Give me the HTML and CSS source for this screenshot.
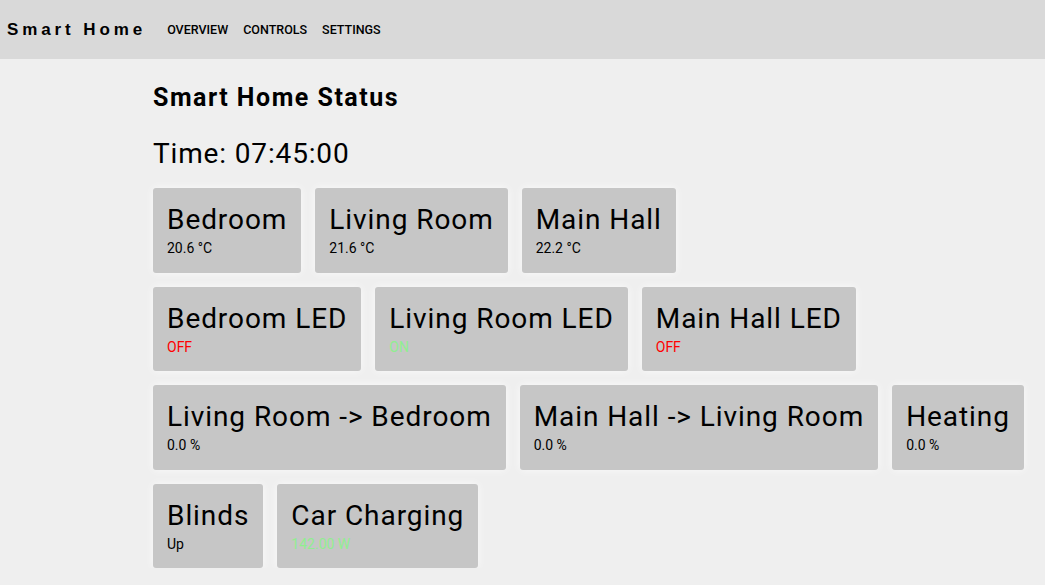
FILE: index.html
```html
<!DOCTYPE html>
<html>
<head>
<meta charset="utf-8">
<link rel="stylesheet" href="styles.css">
</head>
<body>
<header class="topbar">
  <div class="brand">Smart Home</div>
  <nav class="nav">
    <a class="nav-link">OVERVIEW</a>
    <a class="nav-link">CONTROLS</a>
    <a class="nav-link">SETTINGS</a>
  </nav>
</header>
<main class="content">
  <h2 class="page-title">Smart Home Status</h2>
  <div class="time">Time: 07:45:00</div>
  <div class="rows">
    <div class="row">
      <div class="card"><div class="card-title">Bedroom</div><div class="card-value">20.6 °C</div></div>
      <div class="card"><div class="card-title">Living Room</div><div class="card-value">21.6 °C</div></div>
      <div class="card"><div class="card-title">Main Hall</div><div class="card-value">22.2 °C</div></div>
    </div>
    <div class="row">
      <div class="card"><div class="card-title">Bedroom LED</div><div class="card-value off">OFF</div></div>
      <div class="card"><div class="card-title">Living Room LED</div><div class="card-value on">ON</div></div>
      <div class="card"><div class="card-title">Main Hall LED</div><div class="card-value off">OFF</div></div>
    </div>
    <div class="row">
      <div class="card"><div class="card-title">Living Room -&gt; Bedroom</div><div class="card-value">0.0 %</div></div>
      <div class="card"><div class="card-title">Main Hall -&gt; Living Room</div><div class="card-value">0.0 %</div></div>
      <div class="card"><div class="card-title">Heating</div><div class="card-value">0.0 %</div></div>
    </div>
    <div class="row">
      <div class="card"><div class="card-title">Blinds</div><div class="card-value">Up</div></div>
      <div class="card"><div class="card-title">Car Charging</div><div class="card-value on">142.00 W</div></div>
    </div>
  </div>
</main>
</body>
</html>
```
FILE: styles.css
```css
html, body {
  margin: 0;
  padding: 0;
}
body {
  background: #efefef;
  font-family: Roboto, "Liberation Sans", sans-serif;
  color: #000;
}
.topbar {
  height: 59px;
  background: #d9d9d9;
  display: flex;
  align-items: center;
  padding-left: 7px;
}
.brand {
  font-family: "Liberation Sans", Arial, sans-serif;
  font-weight: bold;
  font-size: 17px;
  letter-spacing: 3.9px;
  margin-right: 21px;
}
.nav {
  display: flex;
  gap: 15px;
}
.nav-link {
  font-size: 12.5px;
  font-weight: 500;
  color: #000;
  text-transform: uppercase;
}
.content {
  padding-left: 153px;
}
.page-title {
  margin: 0;
  padding-top: 25px;
  font-size: 25px;
  font-weight: bold;
  line-height: 28px;
  letter-spacing: 1.5px;
}
.time {
  margin-top: 25px;
  font-size: 28px;
  line-height: 33px;
  letter-spacing: 0.85px;
}
.rows {
  margin-top: 18px;
  display: flex;
  flex-direction: column;
  gap: 14px;
}
.row {
  display: flex;
  gap: 14px;
}
.card {
  background: #c6c6c6;
  border-radius: 3px;
  padding: 15px 14px 16.5px;
  box-shadow: 0 0 10px rgba(255, 255, 255, 0.7);
}
.card-title {
  font-size: 28px;
  line-height: 33px;
  letter-spacing: 0.93px;
  white-space: nowrap;
}
.card-value {
  margin-top: 4px;
  font-size: 14px;
  line-height: 16px;
}
.off {
  color: #ff0000;
}
.on {
  color: #90ee90;
}
```
